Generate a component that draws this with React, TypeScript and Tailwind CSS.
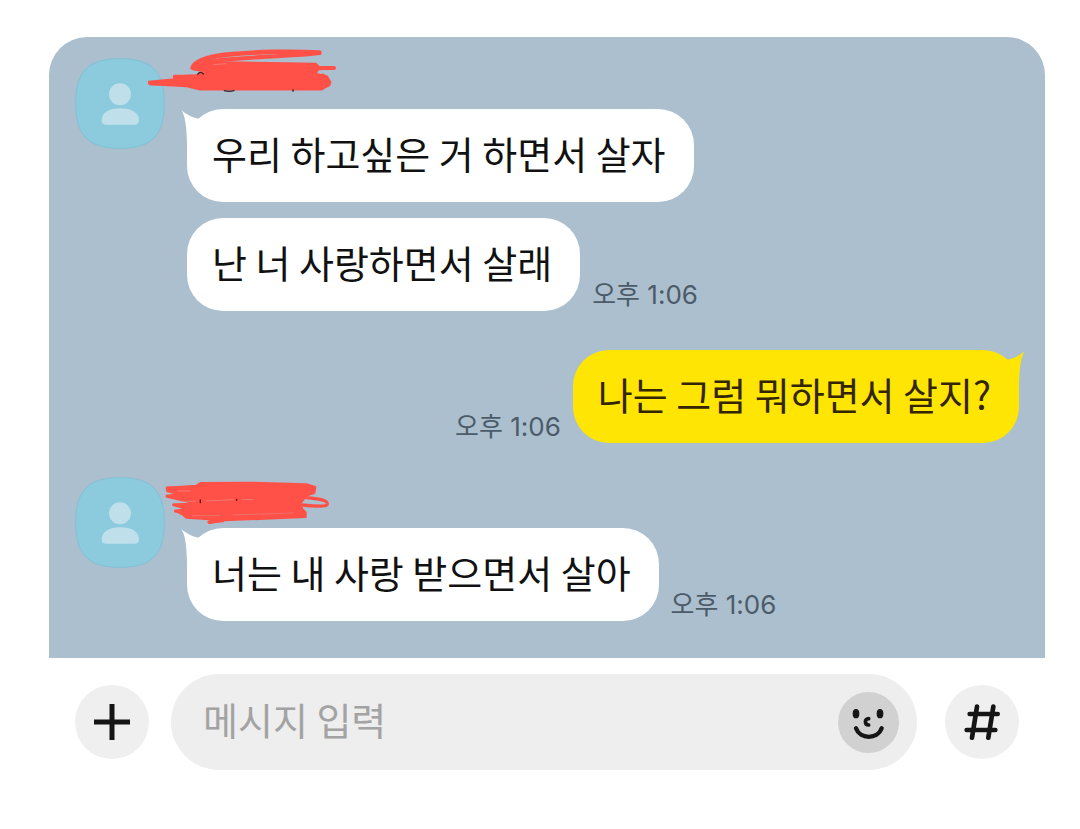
import type { ReactNode } from 'react';
import clsx from 'clsx';

type Message = {
  id: number;
  text: string;
  time?: string;
};

const firstMessages: Message[] = [
  { id: 1, text: '우리 하고싶은 거 하면서 살자' },
  { id: 2, text: '난 너 사랑하면서 살래', time: '오후 1:06' },
];

const myMessages: Message[] = [{ id: 3, text: '나는 그럼 뭐하면서 살지?', time: '오후 1:06' }];

const lastMessages: Message[] = [{ id: 4, text: '너는 내 사랑 받으면서 살아', time: '오후 1:06' }];

function Avatar() {
  return (
    <svg className="w-[90px] h-[91px] shrink-0" viewBox="0 0 270 273" aria-hidden="true">
      <path
        d="M135 2C230 2 268 40 268 136.500S230 271 135 271 2 233 2 136.500 40 2 135 2Z"
        fill="#8ccadd"
        stroke="#82c0d5"
        strokeWidth="3"
      />
      <circle cx="135" cy="109" r="33" fill="#bfe0eb" />
      <path d="M80 188C80 164 102 151 136 151S192 164 192 188C192 196 186 200 178 200H94C86 200 80 196 80 188Z" fill="#bfe0eb" />
    </svg>
  );
}

// Marker strokes over the sender name
function FirstScribble() {
  return (
    <svg
      className="absolute -left-[41px] -top-[11px] w-48 h-[46px]"
      viewBox="318 50 576 138"
      fill="none"
      stroke="#ff5147"
      strokeLinecap="round"
      strokeLinejoin="round"
      aria-hidden="true"
    >
      <path d="M838 67C760 62 640 64 560 73C510 79 466 90 458 112" strokeWidth="14" />
      <path d="M838 68C740 80 590 80 505 94L462 112" strokeWidth="12" />
      <path d="M466 106L520 95L600 96L828 100L838 110L882 113L834 118L828 130L862 138L872 156L862 168L846 178L480 178L440 168L330 162L326 154L404 146L402 138L470 134L500 124L460 118Z" fill="#ff5147" strokeWidth="5" />
      <path d="M330 159H850M836 113H882M404 139H490" strokeWidth="12" />
      <path d="M848 140L862 160" strokeWidth="20" />
      <path d="M520 103L560 100" stroke="#e98a88" strokeWidth="2" />
      <path d="M473 132Q481 121 490 131" stroke="#4a1b20" strokeWidth="4" />
      <path d="M553 181Q568 185 582 181M759 178V183" stroke="#33252b" strokeWidth="4" />
    </svg>
  );
}

function SecondScribble() {
  return (
    <svg
      className="absolute -left-6 top-[2px] w-[168px] h-[46px]"
      viewBox="310 56 504 138"
      fill="none"
      stroke="#ff5147"
      strokeLinecap="round"
      strokeLinejoin="round"
      aria-hidden="true"
    >
      <path d="M322 82L410 76L422 68L570 67L740 72L767 80L764 98L740 106L722 130L728 146L738 156V170L650 174L490 180L450 188L447 184L470 178L380 172L368 162L348 152L380 146L342 134L400 128L322 109L352 100L322 92Z" fill="#ff5147" strokeWidth="6" />
      <path d="M322 83H420M322 107H400M342 133H400M347 152H400M448 186L490 181" strokeWidth="9" />
      <path d="M740 112C772 115 804 118 803 131C802 140 770 138 725 134" strokeWidth="10" />
      <path d="M354 92H392M366 123H408M440 122L520 118M548 118H580" stroke="#e98d8b" strokeWidth="2" />
      <path d="M398 166H480M520 164L700 158" stroke="#e5807f" strokeWidth="2" />
      <path d="M422 119V127M531 117V120" stroke="#5b0f15" strokeWidth="4" />
    </svg>
  );
}

function Bubble({ text, mine = false, tail = false }: { text: string; mine?: boolean; tail?: boolean }) {
  return (
    <div
      className={clsx(
        'relative rounded-[36px] pl-[25px] pr-7 pt-4 pb-[21px] text-[38px] leading-[56px]',
        mine ? 'bg-[#fee504] text-[#332500]' : 'bg-white text-[#111111]'
      )}
    >
      {tail && (
        <svg
          className={clsx('absolute top-0 w-5 h-9', mine ? '-right-[6px] -scale-x-100' : '-left-[6px]')}
          viewBox="423 237 60 108"
          aria-hidden="true"
        >
          <path
            d="M424 241Q440 262 441 345H483V261L475 266Q448 261 424 241Z"
            fill={mine ? '#fee504' : '#ffffff'}
          />
        </svg>
      )}
      <p className="whitespace-nowrap">{text}</p>
    </div>
  );
}

function MessageRow({ message, mine = false, tail = false }: { message: Message; mine?: boolean; tail?: boolean }) {
  return (
    <div className={clsx('flex items-end gap-3', mine && 'flex-row-reverse')}>
      <Bubble text={message.text} mine={mine} tail={tail} />
      {message.time && (
        <time className="whitespace-nowrap font-[Inter,'Noto_Sans_CJK_KR',sans-serif] text-[26px] leading-8 text-[#4b5b69]">
          {message.time}
        </time>
      )}
    </div>
  );
}

function ReceivedGroup({ messages, scribble }: { messages: Message[]; scribble: ReactNode }) {
  return (
    <section className="flex items-start gap-[22px]">
      <Avatar />
      <div className="flex flex-col">
        <div className="relative h-[51px]">{scribble}</div>
        <div className="flex flex-col gap-4">
          {messages.map((message, index) => (
            <MessageRow key={message.id} message={message} tail={index === 0} />
          ))}
        </div>
      </div>
    </section>
  );
}

function InputBar() {
  return (
    <form className="flex items-center px-[26px] pt-4" onSubmit={(e) => e.preventDefault()}>
      <button type="button" aria-label="추가" className="flex size-[74px] shrink-0 items-center justify-center rounded-full bg-[#efefef]">
        <svg className="size-9" viewBox="0 0 36 36" stroke="#151515" strokeWidth="5" aria-hidden="true">
          <path d="M18 0V36M0 18H36" />
        </svg>
      </button>

      <div className="ml-[22px] mr-7 flex h-24 min-w-0 flex-1 items-center rounded-full bg-[#eeeeee] pl-8 pr-[18px]">
        <input
          type="text"
          aria-label="메시지 입력"
          placeholder="메시지 입력"
          className="h-16 min-w-0 flex-1 bg-transparent pb-2 text-[38px] text-[#111111] outline-none placeholder:text-[#a3a3a3]"
        />
        <button type="button" aria-label="이모티콘" className="size-[61px] shrink-0 rounded-full bg-[#d1d1d1]">
          <svg className="size-full" viewBox="0 0 183 183" fill="none" stroke="#151515" strokeLinecap="round" aria-hidden="true">
            <ellipse cx="54" cy="65" rx="10" ry="14" fill="#151515" stroke="none" />
            <ellipse cx="126" cy="65" rx="10" ry="14" fill="#151515" stroke="none" />
            <path d="M92 80C79 80 79 98 92 99" strokeWidth="11" />
            <path d="M54 109C66 143 119 143 131 109" strokeWidth="13" />
          </svg>
        </button>
      </div>

      <button type="button" aria-label="샵검색" className="flex size-[74px] shrink-0 items-center justify-center rounded-full bg-[#efefef]">
        <svg
          className="size-9"
          viewBox="0 0 108 108"
          fill="none"
          stroke="#151515"
          strokeWidth="14"
          strokeLinecap="round"
          aria-hidden="true"
        >
          <path d="M17 30H101M8 78H94M39 8L24 101M88 8L73 101" />
        </svg>
      </button>
    </form>
  );
}

export default function App() {
  return (
    <div className="min-h-screen bg-white pb-14 pl-[49px] pr-[35px] pt-[37px] font-['Noto_Sans_CJK_KR',sans-serif]">
      <main className="flex flex-col rounded-t-[38px] bg-[#abbfce] px-[26px] pb-[37px] pt-[21px]">
        <ReceivedGroup messages={firstMessages} scribble={<FirstScribble />} />

        <section className="mt-[39px]">
          {myMessages.map((message) => (
            <MessageRow key={message.id} message={message} mine tail />
          ))}
        </section>

        <div className="mt-[34px]">
          <ReceivedGroup messages={lastMessages} scribble={<SecondScribble />} />
        </div>
      </main>

      <InputBar />
    </div>
  );
}
